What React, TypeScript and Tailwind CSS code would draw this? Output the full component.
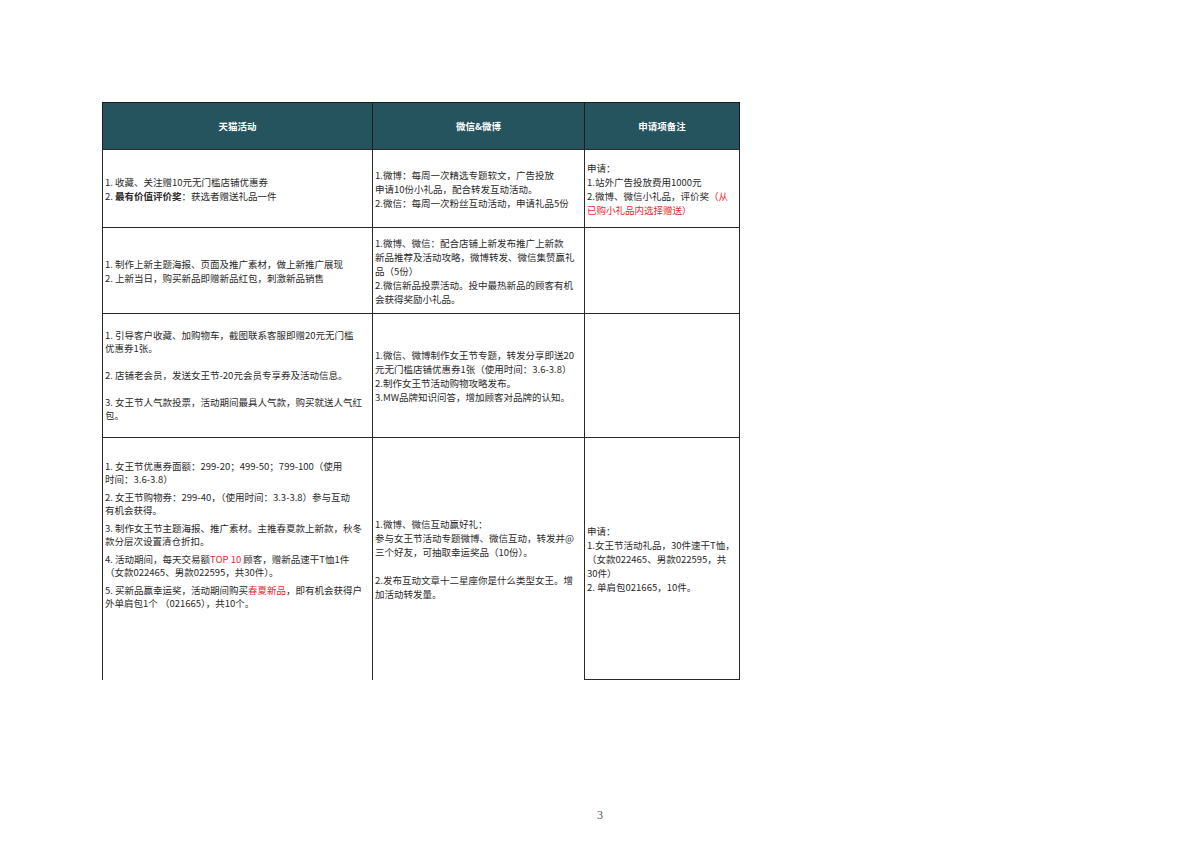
import type { ReactNode } from 'react';

const FONT = { fontFamily: '"Noto Sans CJK SC", "Noto Sans", sans-serif' };

function Red({ children }: { children: ReactNode }) {
	return <span className="text-[#e8262b]">{children}</span>;
}

function Lines({ lines, lead = 'leading-[14px]' }: { lines: ReactNode[]; lead?: string }) {
	return (
		<div className={`${lead} whitespace-nowrap`}>
			{lines.map((l, i) => (
				<div key={i} className={l === '' ? 'h-[5px]' : ''}>
					{l}
				</div>
			))}
		</div>
	);
}

function Cell({ children, className = '' }: { children?: ReactNode; className?: string }) {
	return (
		<div className={`flex items-center px-[2px] text-[9.5px] text-[#2a2a2a] border-[#2a2a2a] ${className}`}>
			{children}
		</div>
	);
}

function HeadCell({ children, className = '' }: { children: ReactNode; className?: string }) {
	return (
		<div
			className={`flex items-center justify-center bg-[#25545f] text-white text-[9.5px] font-bold border-[#1d1d1d] border-l border-t ${className}`}
		>
			{children}
		</div>
	);
}

export default function App() {
	return (
		<div className="w-[1200px] h-[848px] bg-white pt-[102px] pl-[102px]" style={FONT}>
			<div className="grid grid-cols-[270px_212px_156px] grid-rows-[47px_78px_86px_124px_243px] w-[638px]">
				<HeadCell>天猫活动</HeadCell>
				<HeadCell>微信&amp;微博</HeadCell>
				<HeadCell className="border-r">申请项备注</HeadCell>

				{/* row 1 */}
				<Cell className="border-l border-t">
					<Lines
						lines={[
							'1. 收藏、关注赠10元无门槛店铺优惠券',
							<>
								2. <b>最有价值评价奖</b>：获选者赠送礼品一件
							</>,
						]}
					/>
				</Cell>
				<Cell className="border-l border-t">
					<Lines
						lines={[
							'1.微博：每周一次精选专题软文，广告投放',
							'申请10份小礼品，配合转发互动活动。',
							'2.微信：每周一次粉丝互动活动，申请礼品5份',
						]}
					/>
				</Cell>
				<Cell className="border-l border-t border-r">
					<Lines
						lines={[
							'申请：',
							'1.站外广告投放费用1000元',
							<>
								2.微博、微信小礼品，评价奖<Red>（从</Red>
							</>,
							<Red>已购小礼品内选择赠送）</Red>,
						]}
					/>
				</Cell>

				{/* row 2 */}
				<Cell className="border-l border-t">
					<Lines
						lines={[
							'1. 制作上新主题海报、页面及推广素材，做上新推广展现',
							'2. 上新当日，购买新品即赠新品红包，刺激新品销售',
						]}
					/>
				</Cell>
				<Cell className="border-l border-t">
					<Lines
						lines={[
							'1.微博、微信：配合店铺上新发布推广上新款',
							'新品推荐及活动攻略，微博转发、微信集赞赢礼',
							'品（5份）',
							'2.微信新品投票活动。投中最热新品的顾客有机',
							'会获得奖励小礼品。',
						]}
					/>
				</Cell>
				<Cell className="border-l border-t border-r" />

				{/* row 3 */}
				<Cell className="border-l border-t">
					<div className="leading-[13px] whitespace-nowrap">
						<div>1. 引导客户收藏、加购物车，截图联系客服即赠20元无门槛</div>
						<div>优惠券1张。</div>
						<div className="mt-[14px]">2. 店铺老会员，发送女王节-20元会员专享券及活动信息。</div>
						<div className="mt-[14px]">3. 女王节人气款投票，活动期间最具人气款，购买就送人气红</div>
						<div>包。</div>
					</div>
				</Cell>
				<Cell className="border-l border-t">
					<Lines
						lines={[
							'1.微信、微博制作女王节专题，转发分享即送20',
							'元无门槛店铺优惠券1张（使用时间：3.6-3.8）',
							'2.制作女王节活动购物攻略发布。',
							'3.MW品牌知识问答，增加顾客对品牌的认知。',
						]}
					/>
				</Cell>
				<Cell className="border-l border-t border-r" />

				{/* row 4 */}
				<Cell className="border-l border-t pb-[48px]">
					<div className="leading-[13px] whitespace-nowrap">
						<div>1. 女王节优惠券面额：299-20；499-50；799-100（使用</div>
						<div>时间：3.6-3.8）</div>
						<div className="mt-[5px]">2. 女王节购物券：299-40，（使用时间：3.3-3.8）参与互动</div>
						<div>有机会获得。</div>
						<div className="mt-[5px]">3. 制作女王节主题海报、推广素材。主推春夏款上新款，秋冬</div>
						<div>款分层次设置清仓折扣。</div>
						<div className="mt-[5px]">
							4. 活动期间，每天交易额<Red>TOP 10</Red> 顾客，赠新品速干T恤1件
						</div>
						<div>（女款022465、男款022595，共30件）。</div>
						<div className="mt-[5px]">
							5. 买新品赢幸运奖，活动期间购买<Red>春夏新品</Red>，即有机会获得户
						</div>
						<div>外单肩包1个 （021665），共10个。</div>
					</div>
				</Cell>
				<Cell className="border-l border-t">
					<div className="leading-[14px] whitespace-nowrap">
						<div>1.微博、微信互动赢好礼：</div>
						<div>参与女王节活动专题微博、微信互动，转发并@</div>
						<div>三个好友，可抽取幸运奖品（10份）。</div>
						<div className="mt-[14px]">2.发布互动文章十二星座你是什么类型女王。增</div>
						<div>加活动转发量。</div>
					</div>
				</Cell>
				<Cell className="border border-b">
					<Lines
						lines={[
							'申请：',
							'1.女王节活动礼品，30件速干T恤，',
							'（女款022465、男款022595，共',
							'30件）',
							'2. 单肩包021665，10件。',
						]}
					/>
				</Cell>
			</div>

			<div
				className="-ml-[102px] mt-[126px] w-[1200px] text-center text-[12px] text-[#555]"
				style={{ fontFamily: '"Liberation Serif", serif' }}
			>
				3
			</div>
		</div>
	);
}
